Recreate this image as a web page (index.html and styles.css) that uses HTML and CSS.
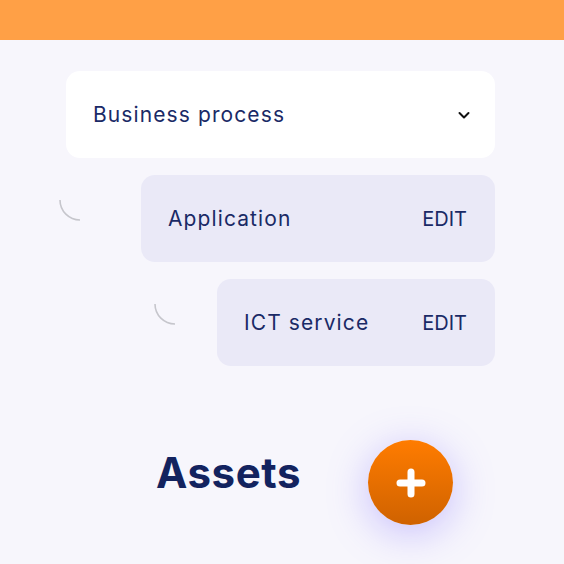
FILE: index.html
```html
<!DOCTYPE html>
<html lang="en">

<head>
    <meta charset="UTF-8">
    <meta name="viewport" content="width=device-width, initial-scale=1.0">
    <title>Assets</title>
    <link rel="stylesheet" href="styles.css">
</head>

<body>
    <div class="topbar"></div>

    <div id="main">
        <div class="select-card">
            <span class="label">Business process</span>
            <svg class="chevron" width="14" height="14" viewBox="0 0 14 14">
                <path d="M2.5 5 L7 9.5 L11.5 5" fill="none" stroke="#111" stroke-width="2" stroke-linecap="round" stroke-linejoin="round" />
            </svg>
        </div>

        <div class="tree-row level-1">
            <svg class="connector" width="22" height="22" viewBox="0 0 22 22">
                <path d="M1 1 A20 20 0 0 0 21 21" fill="none" stroke="#c6c6cc" stroke-width="1.6" />
            </svg>
            <div class="item-card">
                <span class="label">Application</span>
                <span class="edit">EDIT</span>
            </div>
        </div>

        <div class="tree-row level-2">
            <svg class="connector" width="22" height="22" viewBox="0 0 22 22">
                <path d="M1 1 A20 20 0 0 0 21 21" fill="none" stroke="#c6c6cc" stroke-width="1.6" />
            </svg>
            <div class="item-card">
                <span class="label">ICT service</span>
                <span class="edit">EDIT</span>
            </div>
        </div>

        <div class="assets-row">
            <h1>Assets</h1>
            <div class="fab">
                <svg width="34" height="34" viewBox="0 0 34 34">
                    <path d="M17 6 V28 M6 17 H28" stroke="#fff" stroke-width="7" stroke-linecap="round" />
                </svg>
            </div>
        </div>
    </div>
</body>

</html>
```

FILE: styles.css
```css
html,
body {
    min-height: 100%;
}

body {
    margin: 0;
    background-color: #f7f6fc;
    font-family: "Inter", "Liberation Sans", sans-serif;
    color: #1a2a66;
}

.topbar {
    height: 40px;
    background-color: #ffa046;
}

#main {
    display: flex;
    flex-direction: column;
    gap: 17px;
    padding: 31px 69px 60px 66px;
}

.label {
    font-size: 21px;
    letter-spacing: 1.1px;
}

.edit {
    font-size: 20px;
}

.select-card {
    display: flex;
    align-items: center;
    justify-content: space-between;
    height: 87px;
    padding: 0 27px;
    background-color: #fff;
    border-radius: 14px;
}

.chevron {
    margin-right: -3px;
}

.tree-row {
    display: flex;
    align-items: flex-start;
}

.level-1 {
    margin-left: -7px;
}

.level-1 .connector {
    margin: 24px 60px 0 0;
}

.level-2 {
    margin-left: 88px;
}

.level-2 .connector {
    margin: 24px 41px 0 0;
}

.item-card {
    flex: 1;
    display: flex;
    align-items: center;
    justify-content: space-between;
    height: 87px;
    padding: 0 28px 0 27px;
    background-color: #eae9f7;
    border-radius: 14px;
}

.assets-row {
    display: flex;
    align-items: center;
    gap: 67px;
    margin-top: 57px;
    padding-left: 90px;
}

.assets-row h1 {
    margin: 0 0 20px;
    font-size: 42px;
    font-weight: 700;
    letter-spacing: 0.6px;
    color: #13235f;
}

.fab {
    display: flex;
    align-items: center;
    justify-content: center;
    width: 85px;
    height: 85px;
    border-radius: 50%;
    background: linear-gradient(180deg, #ff7c00, #cf6200);
    box-shadow: 0 8px 40px rgba(120, 100, 255, 0.38);
}
```
